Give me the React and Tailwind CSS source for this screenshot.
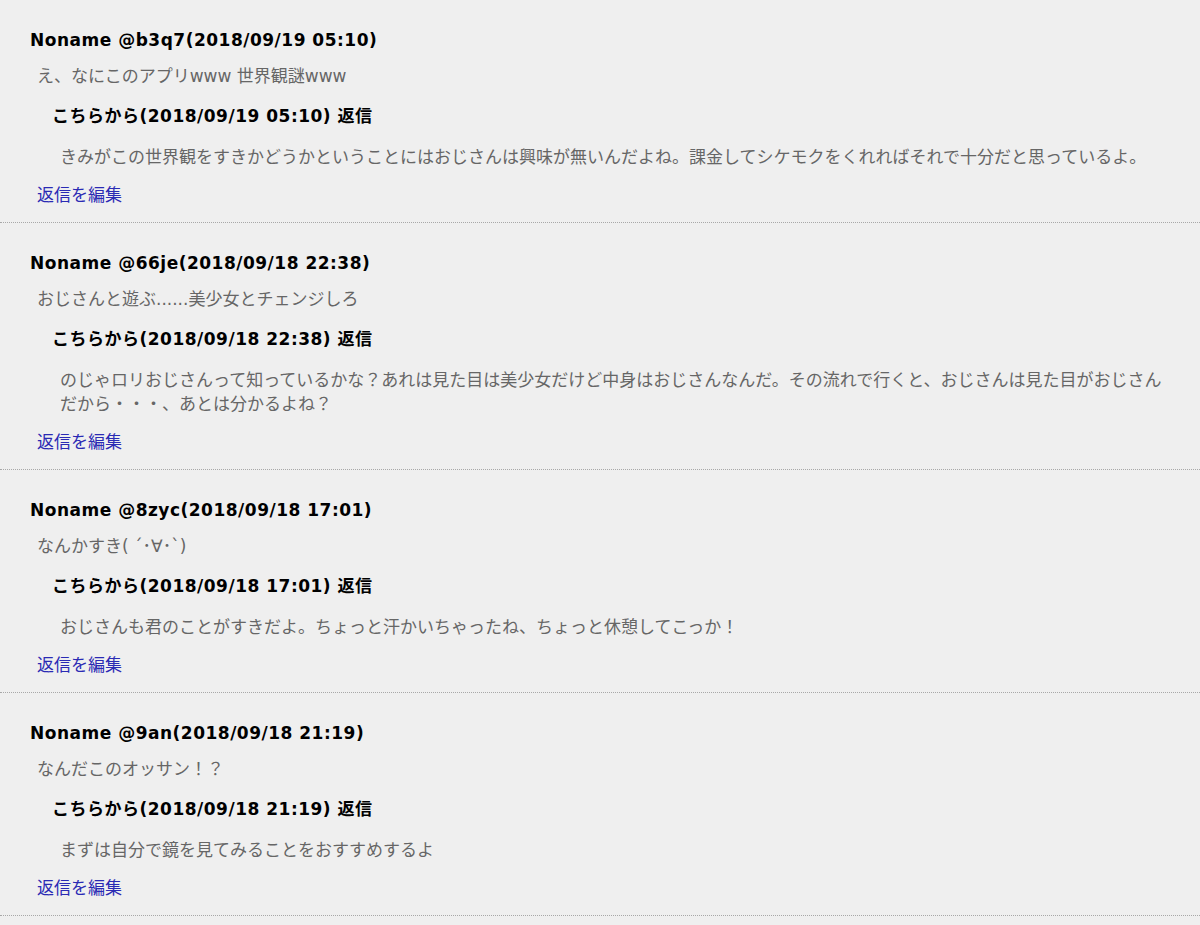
import React from "react";

const posts = [
  {
    user: "Noname @b3q7(2018/09/19 05:10)",
    comment: "え、なにこのアプリwww 世界観謎www",
    replyAt: "こちらから(2018/09/19 05:10) 返信",
    reply:
      "きみがこの世界観をすきかどうかということにはおじさんは興味が無いんだよね。課金してシケモクをくれればそれで十分だと思っているよ。",
  },
  {
    user: "Noname @66je(2018/09/18 22:38)",
    comment: "おじさんと遊ぶ......美少女とチェンジしろ",
    replyAt: "こちらから(2018/09/18 22:38) 返信",
    reply:
      "のじゃロリおじさんって知っているかな？あれは見た目は美少女だけど中身はおじさんなんだ。その流れで行くと、おじさんは見た目がおじさんだから・・・、あとは分かるよね？",
  },
  {
    user: "Noname @8zyc(2018/09/18 17:01)",
    comment: "なんかすき( ´･∀･`)",
    replyAt: "こちらから(2018/09/18 17:01) 返信",
    reply: "おじさんも君のことがすきだよ。ちょっと汗かいちゃったね、ちょっと休憩してこっか！",
  },
  {
    user: "Noname @9an(2018/09/18 21:19)",
    comment: "なんだこのオッサン！？",
    replyAt: "こちらから(2018/09/18 21:19) 返信",
    reply: "まずは自分で鏡を見てみることをおすすめするよ",
  },
];

// コメント1件分
const CommentItem = ({ post }) => (
  <div className="pt-[28px] pb-[15px] border-b border-dotted border-[#a8a8a8]">
    <div className="pl-[30px] font-bold tracking-[0.5px] text-black">{post.user}</div>
    <div className="pl-[37px] mt-[12px] text-[#666666]">{post.comment}</div>
    <div className="pl-[52px] mt-[16px] font-bold tracking-[0.5px] text-black">{post.replyAt}</div>
    <div className="pl-[60px] pr-[30px] mt-[17px] text-[#666666]">{post.reply}</div>
    <div className="pl-[37px] mt-[14px]">
      <a href="#" className="text-[#2a2ab4]">
        返信を編集
      </a>
    </div>
  </div>
);

export default function App() {
  return (
    <div
      className="min-h-[925px] bg-[#efefef] text-[17px] leading-[24px]"
      style={{ fontFamily: '"DejaVu Sans", "Noto Sans CJK JP", sans-serif' }}
    >
      {posts.map((post) => (
        <CommentItem key={post.user} post={post} />
      ))}
    </div>
  );
}
